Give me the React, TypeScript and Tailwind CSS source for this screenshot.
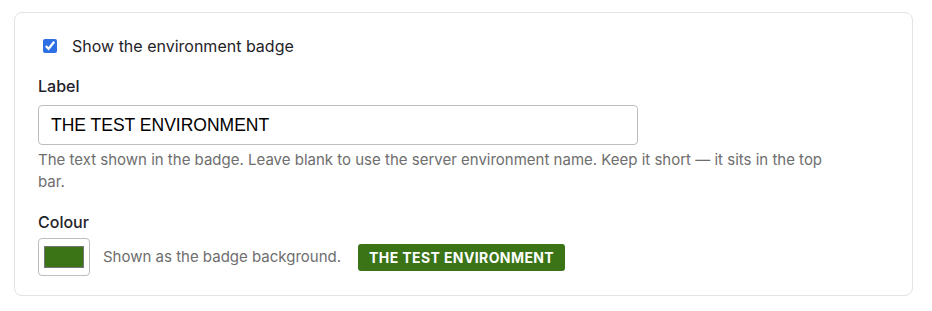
import { useState } from 'react'

export default function App() {
  const [enabled, setEnabled] = useState(true)
  const [label, setLabel] = useState('THE TEST ENVIRONMENT')
  const [colour, setColour] = useState('#3a7417')

  return (
    <div className="min-h-screen bg-white pl-[14px] pt-[12px] font-['Inter',sans-serif] text-[#1f2328]">
      <div className="w-[899px] rounded-lg border border-[#e3e3e3] px-[23px] pt-[20px] pb-[19px]">
        {/* badge toggle */}
        <label className="flex h-6 items-center gap-[15px] pl-[5px] pt-px text-[16px]">
          <input
            type="checkbox"
            checked={enabled}
            onChange={(e) => setEnabled(e.target.checked)}
            className="m-0 h-[14px] w-[14px] accent-[#2f6fe4]"
          />
          <span>Show the environment badge</span>
        </label>

        {/* label field */}
        <div className="mt-[18px]">
          <div className="mb-2 text-[16px] font-medium leading-[22px]">Label</div>
          <input
            value={label}
            onChange={(e) => setLabel(e.target.value)}
            className="h-10 w-[600px] rounded border border-[#bdbdbd] px-3 font-['Liberation_Sans',Arial,sans-serif] text-[17.5px] text-black outline-none"
          />
          <p className="mt-1 max-w-[790px] text-[15px] leading-[22px] text-[#6e6e6e]">
            The text shown in the badge. Leave blank to use the server environment name. Keep it short — it sits in the top bar.
          </p>
        </div>

        {/* colour field */}
        <div className="mt-[18px]">
          <div className="mb-[5px] text-[16px] font-medium leading-[22px]">Colour</div>
          <div className="flex items-center">
            <input
              type="color"
              value={colour}
              onChange={(e) => setColour(e.target.value)}
              className="h-[38px] w-[52px] cursor-pointer rounded border border-[#bdbdbd] bg-white p-[3px]"
            />
            <span className="ml-[13px] text-[15px] text-[#6e6e6e]">Shown as the badge background.</span>
            <span
              className="ml-[17px] flex h-[27px] items-center rounded-[3px] px-[11px] text-[14px] font-bold tracking-[0.4px] text-white"
              style={{ backgroundColor: colour }}
            >
              {label || 'ENVIRONMENT'}
            </span>
          </div>
        </div>
      </div>
    </div>
  )
}
